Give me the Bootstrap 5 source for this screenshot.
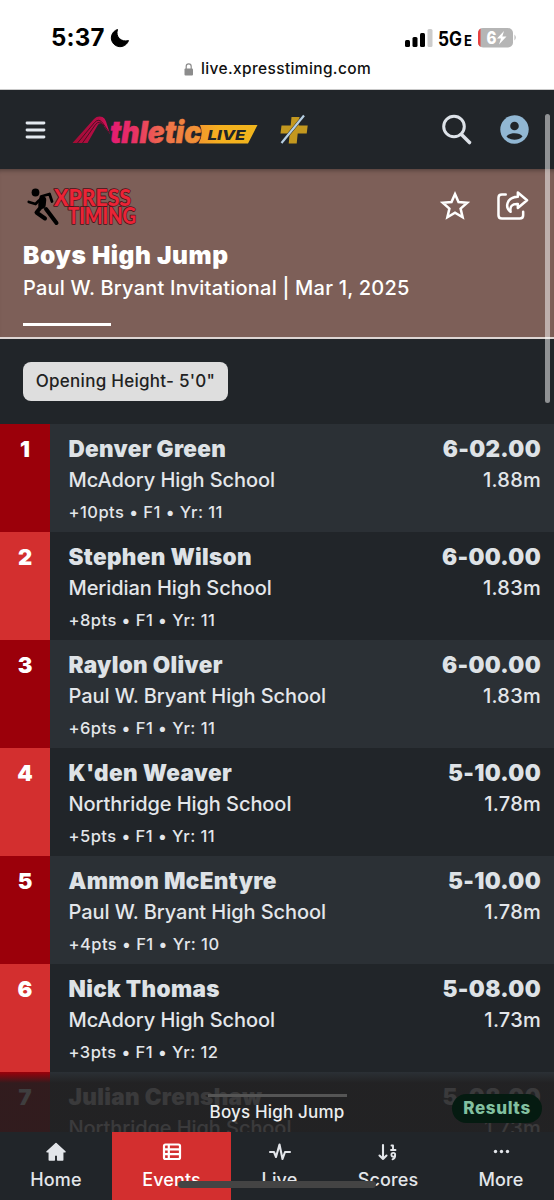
<!DOCTYPE html>
<html lang="en" data-bs-theme="dark">
<head>
<meta charset="utf-8">
<meta name="viewport" content="width=device-width, initial-scale=1">
<title>Boys High Jump</title>
<link href="https://cdn.jsdelivr.net/npm/bootstrap@5.3.0/dist/css/bootstrap.min.css" rel="stylesheet">
<style>
  body { font-family: Inter, "Liberation Sans", sans-serif; background: #212529; color: #e3e6ea; }
  svg { display: block; flex: none; overflow: visible; }
  .screen { width: 554px; height: 1200px; }
  .phone-bar { height: 90px; background: #fff; color: #000; border-bottom: 1px solid #c9c9c9; }
  .clock { font-size: 24px; font-weight: 700; line-height: 28px; letter-spacing: .2px; }
  .address { font-size: 15.5px; font-weight: 550; line-height: 20px; color: #111; letter-spacing: .36px; }
  .site-bar { height: 79px; background: #212529; }
  .meet { height: 170px; background: #7d5f58; color: #fff; border-bottom: 2px solid #ddd5d3; box-shadow: inset 0 5px 5px -4px #0006; padding: 15px 23px 0; }
  .meet h1 { font-size: 24.5px; font-weight: 900; line-height: 30px; letter-spacing: .55px; }
  .meet-sub { font-size: 20px; font-weight: 500; line-height: 26px; letter-spacing: .21px; }
  .tab-line { width: 88px; height: 3px; background: #fff; }
  .filters { height: 85px; padding: 23px; }
  .height-chip { height: 39px; width: 205px; background: #dedede; color: #222; border-radius: 8px; font-size: 17px; font-weight: 500; letter-spacing: .27px; padding-top: 1px; }
  .entry { height: 108px; flex: none; background: #212529; }
  .entry:nth-child(odd) { background: #2b3035; }
  .place { width: 50px; background: #d32f2f; color: #fff; font-size: 22px; font-weight: 900; line-height: 28px; padding-top: 11px; }
  .entry:nth-child(odd) .place { background: #9b000a; }
  .who { padding: 11px 0 0 18.5px; }
  .result { padding: 11px 13px 0 0; }
  .top-line { font-size: 22.5px; font-weight: 900; line-height: 28px; color: #dee2e6; letter-spacing: .33px; }
  .mid-line { font-size: 20px; font-weight: 450; line-height: 26px; margin-top: 4px; letter-spacing: -.07px; }
  .result .mid-line { letter-spacing: .25px; }
  .info-line { font-size: 16.5px; font-weight: 500; line-height: 22px; margin-top: 8px; letter-spacing: .46px; }
  .drawer { height: 60px; background: linear-gradient(#21202100, #212021dd 11px, #212021dd); }
  .drawer-title { font-size: 17px; font-weight: 500; line-height: 22px; color: #eceef0; letter-spacing: .17px; }
  .drawer-line { width: 139px; height: 3px; background: #555; }
  .results-pill { right: 12px; top: 22px; width: 90px; height: 29px; background: #051b11; color: #82c0a0; font-size: 17px; font-weight: 800; letter-spacing: .65px; }
  .bottom-tabs { height: 68px; background: #212529; font-size: 18px; font-weight: 500; line-height: 24px; letter-spacing: .12px; }
  .bottom-tabs .tab-cell { padding-top: 10px; gap: 4px; color: #e3e6ea; text-decoration: none; }
  .bottom-tabs .chosen { background: #d32f2f; color: #fff; }
  .home-pill { left: 178px; bottom: 12px; width: 198px; height: 7px; background: #444; border-radius: 4px; }
  .scroll-thumb { left: 545px; top: 114px; width: 5px; height: 289px; border-radius: 3px; background: #ffffff80; }
</style>
</head>
<body>
<div class="screen position-relative d-flex flex-column overflow-hidden">

  <header class="phone-bar flex-shrink-0">
    <div class="d-flex align-items-center justify-content-between" style="padding:24px 38px 0 51px">
      <div class="d-flex align-items-center clock"><span style="width:56px">5:37</span>
        <svg style="margin-left:3px" width="20" height="20" viewBox="0 0 20 20"><path d="M7.500 1.500A8.800 8.800 0 1 0 18.500 12.600C11.500 14.500 5 9 7.500 1.500Z" fill="#000" stroke="#000" stroke-linejoin="round"/></svg>
      </div>
      <svg width="112" height="28" viewBox="0 0 112 28" font-family="Inter, sans-serif">
        <rect x="1" y="16" width="5" height="7" rx="1.500"/><rect x="8.500" y="13" width="5" height="10" rx="1.500"/><rect x="16" y="9" width="5" height="14" rx="1.500"/><rect x="23.500" y="5" width="5" height="18" rx="1.500" fill="#ccc"/>
        <text x="34" y="22" font-size="19.500" font-weight="650" textLength="24" lengthAdjust="spacingAndGlyphs">5G</text>
        <text x="60" y="22" font-size="15" font-weight="700" textLength="8" lengthAdjust="spacingAndGlyphs">E</text>
        <clipPath id="cell"><rect x="74" y="4" width="35" height="19.500" rx="5"/></clipPath>
        <g clip-path="url(#cell)"><rect x="74" y="4" width="35" height="20" fill="#b5b5b5"/><rect x="74" y="4" width="2.500" height="20" fill="#e8403f"/></g>
        <path d="M110.500 10.500q2.500 3 0 6z" fill="#b5b5b5"/>
        <text x="82.500" y="20" font-size="17.500" font-weight="800" fill="#fff" textLength="10" lengthAdjust="spacingAndGlyphs">6</text>
        <path d="M100 7l-7 7.500h4l-2 6 7.500-8h-4.200z" fill="#fff"/>
      </svg>
    </div>
    <div class="d-flex align-items-center address" style="padding:7px 0 0 184px">
      <svg width="10" height="13" viewBox="0 0 10 13"><rect x=".5" y="5.500" width="8.500" height="7" rx="1" fill="#8c8c8c"/><path d="M2.200 6V3.500a2.500 2.700 0 0 1 5 0V6" fill="none" stroke="#8c8c8c" stroke-width="1.200"/></svg>
      <span style="margin-left:7px">live.xpresstiming.com</span>
    </div>
  </header>

  <nav class="site-bar flex-shrink-0 d-flex align-items-center">
    <svg style="margin-left:25px" width="21" height="20" viewBox="0 0 21 20"><path d="M2 3h17M2 10h17M2 17h17" stroke="#e3e9ef" stroke-width="2.800" stroke-linecap="round"/></svg>
    <svg style="margin-left:26px" width="188" height="32" viewBox="0 0 188 32">
      <defs>
        <linearGradient id="word" gradientUnits="userSpaceOnUse" x1="38" y1="0" x2="130" y2="0"><stop offset="0" stop-color="#e31a72"/><stop offset=".25" stop-color="#e82f66"/><stop offset=".6" stop-color="#ee704b"/><stop offset="1" stop-color="#f29a31"/></linearGradient>
        <linearGradient id="flag"><stop offset="0" stop-color="#f3982e"/><stop offset=".35" stop-color="#f5b01f"/><stop offset="1" stop-color="#f0b51c"/></linearGradient>
        <linearGradient id="peak"><stop offset="0" stop-color="#a20c34"/><stop offset=".7" stop-color="#b60d46"/><stop offset="1" stop-color="#d91460"/></linearGradient>
      </defs>
      <path d="M.5 29 22 5Q25.500 1.500 30.500 3 33 4 34 7.500L38 20 31 11Q28 7.500 25.500 11.500L15.500 29Z" fill="url(#peak)"/>
      <path d="M5.500 29 22.500 8.500Q27 3.500 31 9.500L37.500 19M10.500 29 23.500 10.500Q27.500 5.500 32 12" fill="none" stroke="#40101f" stroke-width=".9"/>
      <path d="M128 11h57.500L176 29.500h-49.500q5.500-9 1.500-18.500z" fill="url(#flag)"/>
      <text x="38" y="28.500" font-family="Inter, sans-serif" font-size="30.500" font-weight="900" font-style="italic" fill="url(#word)" stroke="url(#word)" stroke-width=".5" textLength="91" lengthAdjust="spacingAndGlyphs">thletic</text>
      <text x="135.500" y="25.500" font-family="Inter, sans-serif" font-size="13.500" font-weight="800" font-style="italic" fill="#202428" textLength="38" lengthAdjust="spacingAndGlyphs">LIVE</text>
    </svg>
    <svg style="margin-left:20px" width="28" height="31" viewBox="0 0 28 31"><path d="M11.500 3h8l-.8 8.500h9l-1 8h-9l-1 10h-8l1-10H.500l1-8h9.200z" fill="#c3981f"/><path d="M1.500 29 24 1.500" stroke="#212529" stroke-width="3"/><path d="M1.500 29 24 1.500" stroke="#b7cfe2" stroke-width="2.200"/></svg>
    <svg class="ms-auto" width="32" height="32" viewBox="0 0 32 32" fill="none" stroke="#dde2e8"><circle cx="13" cy="12.500" r="10.300" stroke-width="3"/><path d="m20.500 20.500 8 8" stroke-width="3.600" stroke-linecap="round"/></svg>
    <svg style="margin:0 25px 0 27px" width="29" height="29" viewBox="0 0 29 29"><circle cx="14.500" cy="14.500" r="14.200" fill="#91b7d3"/><circle cx="14.500" cy="11" r="4.300" fill="#212529"/><path d="M6.500 21.500c2.500-4.300 13.500-4.300 16 0-3.800 4.300-12.200 4.300-16 0z" fill="#212529"/></svg>
  </nav>

  <section class="meet flex-shrink-0">
    <div class="d-flex align-items-center" style="height:44px">
      <svg style="margin-left:4px" width="112" height="42" viewBox="0 0 112 42">
        <circle cx="8.500" cy="7.500" r="3.900" fill="#000"/>
        <g fill="none" stroke="#000" stroke-linecap="round" stroke-linejoin="round"><path d="M15.500 15 15 20" stroke-width="7.500"/><path d="M14 11.500 22.500 9l2.500 7.500M12 15.500 8.500 19 1.800 17" stroke-width="2.800"/><path d="m14 22-4.500 5.500L18 33.500" stroke-width="4"/><path d="m19 24 4.500 6 6 8" stroke-width="4"/></g>
        <g font-family="Lato, sans-serif" font-weight="900" fill="#ea2436" stroke="#4a1218" stroke-width="1.600" paint-order="stroke" stroke-linejoin="round">
          <text x="27" y="21" font-size="23.500" textLength="77" lengthAdjust="spacingAndGlyphs">XPRESS</text>
          <text x="41" y="38.500" font-size="22" textLength="68" lengthAdjust="spacingAndGlyphs">TIMING</text>
        </g>
      </svg>
      <svg class="ms-auto" width="30" height="30" viewBox="0 0 30 30"><path d="m13 3 3.500 8 8.700.8-6.600 5.800 2 8.600-7.600-4.600-7.600 4.600 2-8.600L.8 11.800 9.500 11z" fill="none" stroke="#fff" stroke-width="2.500"/></svg>
      <svg style="margin:0 2px 0 25px" width="32" height="30" viewBox="0 0 33 31" fill="none" stroke="#fff" stroke-width="2.600" stroke-linecap="round" stroke-linejoin="round"><path d="M9 3.500H5Q1.500 3.500 1.500 7v18Q1.500 28.500 5 28.500h18.500q3.500 0 3.500-3.500V21.500"/><path d="M21.500 1.500 31 9.500 21.500 17.500V13.500Q12.500 13 14 21.500C8 17 9.500 6.500 21.500 6V1.500Z"/></svg>
    </div>
    <h1 class="mb-0" style="margin-top:12px">Boys High Jump</h1>
    <div class="meet-sub" style="margin-top:5px">Paul W. Bryant Invitational | Mar 1, 2025</div>
    <div class="tab-line" style="margin-top:22px"></div>
  </section>

  <div class="filters flex-shrink-0"><div class="height-chip d-flex align-items-center justify-content-center">Opening Height- 5'0"</div></div>

  <main class="position-relative flex-grow-1 overflow-hidden" style="min-height:0">
    <div>
      <div class="entry d-flex"><div class="place text-center">1</div><div class="who"><div class="top-line">Denver Green</div><div class="mid-line">McAdory High School</div><div class="info-line">+10pts • F1 • Yr: 11</div></div><div class="result ms-auto text-end"><div class="top-line">6-02.00</div><div class="mid-line">1.88m</div></div></div>
      <div class="entry d-flex"><div class="place text-center">2</div><div class="who"><div class="top-line">Stephen Wilson</div><div class="mid-line">Meridian High School</div><div class="info-line">+8pts • F1 • Yr: 11</div></div><div class="result ms-auto text-end"><div class="top-line">6-00.00</div><div class="mid-line">1.83m</div></div></div>
      <div class="entry d-flex"><div class="place text-center">3</div><div class="who"><div class="top-line">Raylon Oliver</div><div class="mid-line">Paul W. Bryant High School</div><div class="info-line">+6pts • F1 • Yr: 11</div></div><div class="result ms-auto text-end"><div class="top-line">6-00.00</div><div class="mid-line">1.83m</div></div></div>
      <div class="entry d-flex"><div class="place text-center">4</div><div class="who"><div class="top-line">K'den Weaver</div><div class="mid-line">Northridge High School</div><div class="info-line">+5pts • F1 • Yr: 11</div></div><div class="result ms-auto text-end"><div class="top-line">5-10.00</div><div class="mid-line">1.78m</div></div></div>
      <div class="entry d-flex"><div class="place text-center">5</div><div class="who"><div class="top-line">Ammon McEntyre</div><div class="mid-line">Paul W. Bryant High School</div><div class="info-line">+4pts • F1 • Yr: 10</div></div><div class="result ms-auto text-end"><div class="top-line">5-10.00</div><div class="mid-line">1.78m</div></div></div>
      <div class="entry d-flex"><div class="place text-center">6</div><div class="who"><div class="top-line">Nick Thomas</div><div class="mid-line">McAdory High School</div><div class="info-line">+3pts • F1 • Yr: 12</div></div><div class="result ms-auto text-end"><div class="top-line">5-08.00</div><div class="mid-line">1.73m</div></div></div>
      <div class="entry d-flex"><div class="place text-center">7</div><div class="who"><div class="top-line">Julian Crenshaw</div><div class="mid-line">Northridge High School</div></div><div class="result ms-auto text-end"><div class="top-line">5-08.00</div><div class="mid-line">1.73m</div></div></div>
    </div>
    <div class="drawer position-absolute bottom-0 start-0 w-100 d-flex flex-column align-items-center">
      <div class="drawer-line" style="margin-top:22px"></div>
      <div class="drawer-title" style="margin-top:4px">Boys High Jump</div>
      <div class="results-pill rounded-pill position-absolute d-flex align-items-center justify-content-center">Results</div>
    </div>
  </main>

  <nav class="bottom-tabs d-flex flex-shrink-0">
    <a class="tab-cell d-flex flex-column align-items-center" style="width:112px"><svg width="22" height="22" viewBox="0 0 22 22"><path d="m11 2.500 9 8.200H17.700v8.300h-5v-5H9.300v5h-5v-8.300H2z" fill="currentColor" stroke="currentColor" stroke-width="1.500" stroke-linejoin="round" transform="translate(0 -1)"/></svg><span>Home</span></a>
    <a class="tab-cell chosen d-flex flex-column align-items-center" style="width:119px"><svg width="22" height="22" viewBox="0 0 22 22" fill="none" stroke="currentColor" stroke-width="2.200"><rect x="3" y="2.500" width="16" height="14.500" rx="1.500"/><path d="M3 7.300h16M3 12.100h16M7.800 2.500v14.500"/></svg><span>Events</span></a>
    <a class="tab-cell d-flex flex-column align-items-center" style="width:97px"><svg width="24" height="22" viewBox="0 0 24 22" fill="none" stroke="currentColor" stroke-width="2.100" stroke-linecap="round" stroke-linejoin="round"><path d="M2 10h4l2 5L11.500 2.500l3 14.500L17 10h5"/></svg><span>Live</span></a>
    <a class="tab-cell d-flex flex-column align-items-center" style="width:120px"><svg width="22" height="22" viewBox="0 0 22 22" fill="none" stroke="currentColor" stroke-width="2.100" stroke-linecap="round" stroke-linejoin="round"><path d="M6 3v14M2.500 13.500 6 17l3.500-3.500"/><path d="M14.500 3.500h1.500v4M14 8h4.500" stroke-width="1.900"/><circle cx="16.300" cy="12.800" r="1.900" stroke-width="1.800"/><path d="M18.200 13q0 3.500-2.700 4.300" stroke-width="1.800"/></svg><span>Scores</span></a>
    <a class="tab-cell d-flex flex-column align-items-center" style="width:106px"><svg width="22" height="22" viewBox="0 0 22 22" fill="currentColor"><circle cx="5.500" cy="9.500" r="1.700"/><circle cx="11.500" cy="9.500" r="1.700"/><circle cx="17.500" cy="9.500" r="1.700"/></svg><span>More</span></a>
  </nav>

  <div class="home-pill position-absolute"></div>
  <div class="scroll-thumb position-absolute"></div>
</div>
<script src="https://cdn.jsdelivr.net/npm/bootstrap@5.3.0/dist/js/bootstrap.bundle.min.js"></script>
</body>
</html>
